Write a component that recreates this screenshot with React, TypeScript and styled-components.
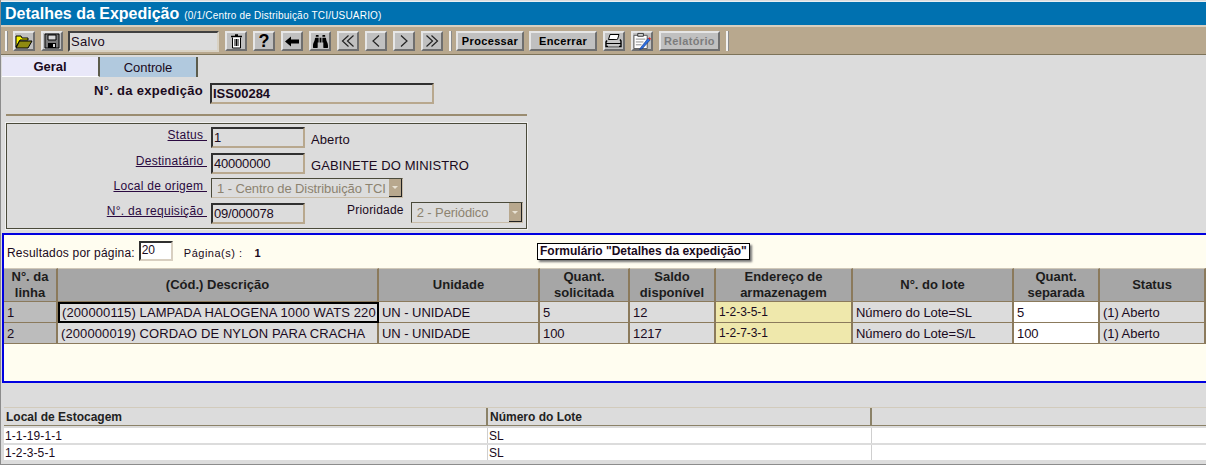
import React from 'react';
import styled, { createGlobalStyle, css } from 'styled-components';
import { FaBinoculars } from 'react-icons/fa';

const GlobalStyle = createGlobalStyle`
  html, body {
    margin: 0;
    padding: 0;
    background: #dcdcdc;
    overflow: hidden;
  }
  body {
    font-family: 'Liberation Sans', Arial, sans-serif;
    font-size: 13px;
    color: #1a0a20;
  }
`;

const Page = styled.div`
  width: 1206px;
  height: 465px;
  box-sizing: border-box;
  padding-top: 1px;
  border-left: 1px solid #8c8c8c;
  border-bottom: 1px solid #8c8c8c;
  overflow: hidden;
  background: #dcdcdc;
`;

const TitleBar = styled.div`
  height: 23px;
  padding-left: 4px;
  border-top: 1px solid #e8f0f4;
  background: #0071b0;
  display: flex;
  align-items: center;
  gap: 5px;
  color: #fff;
  white-space: nowrap;
`;

const TitleText = styled.span`
  font-size: 16px;
  font-weight: bold;
`;

const TitleSub = styled.span`
  font-size: 10px;
  letter-spacing: 0.2px;
  margin-top: 3px;
`;

const Toolbar = styled.div`
  height: 26px;
  border-top: 2px solid #d8cfc0;
  border-bottom: 1px solid #7d7359;
  background: #b8a88e;
  display: flex;
  align-items: center;
  padding: 1px 0 0 4px;
`;

const Separator = styled.div<{ $ml?: number; $mr?: number }>`
  width: 2px;
  height: 20px;
  background: #f2f2f2;
  border-right: 1px solid #8a8a8a;
  margin-left: ${p => p.$ml ?? 0}px;
  margin-right: ${p => p.$mr ?? 0}px;
`;

const raised = css`
  box-sizing: border-box;
  border-style: solid;
  border-width: 2px;
  border-color: #e6e6e6 #6f6f6f #6f6f6f #e6e6e6;
  background: #c0c0c0;
`;

const IconButton = styled.div<{ $mr?: number }>`
  ${raised}
  width: 22px;
  height: 20px;
  flex: none;
  display: flex;
  align-items: center;
  justify-content: center;
  margin-right: ${p => p.$mr ?? 6}px;
  color: #000;
`;

const HelpGlyph = styled.span`
  font-size: 18px;
  font-weight: bold;
  line-height: 16px;
`;

const TextButton = styled.div<{ $w: number; $mr?: number; $off?: boolean }>`
  ${raised}
  width: ${p => p.$w}px;
  height: 20px;
  flex: none;
  display: flex;
  align-items: center;
  justify-content: center;
  margin-right: ${p => p.$mr ?? 5}px;
  font-size: 11px;
  font-weight: bold;
  letter-spacing: 0.35px;
  color: ${p => (p.$off ? '#7c7c7c' : '#000')};
`;

const StatusBox = styled.div`
  box-sizing: border-box;
  width: 151px;
  height: 21px;
  flex: none;
  margin: 0 6px 0 5px;
  padding-left: 1px;
  display: flex;
  align-items: center;
  border-style: solid;
  border-width: 2px;
  border-color: #404040 #d9d2c4 #d9d2c4 #404040;
  background: #dcdcdc;
  font-size: 13px;
  letter-spacing: 0.3px;
`;

const Tabs = styled.div`
  display: flex;
  padding: 2px 0 0 1px;
  height: 20px;
`;

const Tab = styled.div<{ $active?: boolean }>`
  box-sizing: border-box;
  width: 98px;
  height: 20px;
  display: flex;
  align-items: center;
  justify-content: center;
  font-size: 13px;
  font-weight: ${p => (p.$active ? 'bold' : 'normal')};
  letter-spacing: ${p => (p.$active ? '0' : '-0.1px')};
  background: ${p => (p.$active ? '#e9e8f9' : '#b1c9de')};
  border-right: 2px solid #5c5c4c;
  border-bottom: ${p => (p.$active ? '1px solid #fff' : 'none')};
`;

const NumberRow = styled.div`
  display: flex;
  align-items: flex-start;
  padding-top: 6px;
  height: 31px;
`;

const NumberLabel = styled.div`
  width: 202px;
  text-align: right;
  font-weight: bold;
  letter-spacing: 0.3px;
`;

const sunken = css`
  box-sizing: border-box;
  border-style: solid;
  border-width: 2px;
  border-color: #303030 #b8a88e #b8a88e #303030;
  background: #dcdcdc;
  display: flex;
  align-items: center;
  padding-left: 1px;
`;

const NumberInput = styled.div`
  ${sunken}
  width: 224px;
  height: 21px;
  margin-left: 7px;
  font-weight: bold;
`;

const Divider = styled.div`
  width: 521px;
  height: 2px;
  margin: 0 0 7px 5px;
  background: #9a8c70;
`;

const HeaderPanel = styled.div`
  box-sizing: border-box;
  width: 521px;
  height: 106px;
  margin-left: 5px;
  padding-top: 3px;
  border: 1px solid #4a4a3a;
  outline: 1px solid #f0f0f0;
  display: flex;
  flex-direction: column;
`;

const FieldRow = styled.div<{ $h: number }>`
  height: ${p => p.$h}px;
  flex: none;
  display: flex;
  align-items: flex-start;
`;

const FieldLabel = styled.div`
  width: 200px;
  padding-top: 1px;
  font-size: 12px;
  text-align: right;
  text-decoration: underline;
  letter-spacing: 0.3px;
  white-space: pre;
  color: #2a0a40;
`;

const FieldInput = styled.div`
  ${sunken}
  width: 94px;
  height: 21px;
  margin-left: 4px;
  letter-spacing: -0.2px;
`;

const FieldText = styled.div`
  margin: 5px 0 0 6px;
  letter-spacing: 0.1px;
`;

const FakeSelect = styled.div<{ $w: number; $ml?: number; $h?: number; $mt?: number }>`
  box-sizing: border-box;
  width: ${p => p.$w}px;
  height: ${p => p.$h ?? 20}px;
  margin-left: ${p => p.$ml ?? 4}px;
  margin-top: ${p => p.$mt ?? 0}px;
  padding-left: 5px;
  display: flex;
  align-items: center;
  justify-content: space-between;
  flex: none;
  border-style: solid;
  border-width: 1px;
  border-color: #4a4a3a #c8bca8 #c8bca8 #4a4a3a;
  color: #8c8370;
  letter-spacing: -0.1px;
  white-space: nowrap;
`;

const SelectArrow = styled.div`
  width: 13px;
  height: 100%;
  background: #b8a88e;
  border-right: 1px solid #222;
  border-bottom: 1px solid #222;
  box-sizing: border-box;
  display: flex;
  align-items: center;
  justify-content: center;
  &::after {
    content: '';
    border-left: 3px solid transparent;
    border-right: 3px solid transparent;
    border-top: 3px solid #e8e2d4;
  }
`;

const PriorityLabel = styled.div`
  margin-left: 42px;
  font-size: 12px;
  letter-spacing: 0.2px;
`;

const BluePanel = styled.div`
  box-sizing: border-box;
  margin: 4px 0 0 1px;
  height: 150px;
  border: 2px solid #0000e0;
  border-right: none;
  background: #fffdf0;
`;

const PagerRow = styled.div`
  height: 30px;
  position: relative;
  display: flex;
  align-items: center;
  padding: 3px 0 0 3px;
  font-size: 12px;
  letter-spacing: 0.2px;
`;

const PageSizeInput = styled.div`
  ${sunken}
  width: 34px;
  height: 20px;
  margin: 0 11px 5px 4px;
  background: #fff;
  border-color: #303030 #d8cfc0 #d8cfc0 #303030;
  font-size: 12px;
  letter-spacing: -0.3px;
  align-items: flex-start;
`;

const PageLabel = styled.span`
  font-size: 11px;
  letter-spacing: 0.5px;
`;

const PageValue = styled.span`
  margin-left: 12px;
  font-size: 11px;
  font-weight: bold;
`;

const FormBadge = styled.div`
  position: absolute;
  left: 533px;
  top: 8px;
  height: 17px;
  box-sizing: border-box;
  padding: 0 2px;
  background: #fff;
  border: 1px solid #000;
  box-shadow: 2px 2px 2px #777;
  font-size: 12px;
  font-weight: bold;
  letter-spacing: 0;
  line-height: 15px;
  white-space: nowrap;
`;

const columns = '54px 321px 161px 90px 86px 137px 161px 86px 1fr';

const GridHead = styled.div`
  display: grid;
  grid-template-columns: ${columns};
  height: 34px;
`;

const HeadCell = styled.div`
  box-sizing: border-box;
  background: #a6a6a6;
  border-right: 2px solid #8b7a5c;
  border-top: 1px solid #d0c8b8;
  border-bottom: 1px solid #8b7a5c;
  display: flex;
  align-items: center;
  justify-content: center;
  text-align: center;
  font-weight: bold;
  line-height: 16px;
  color: #1c1c1c;
`;

const GridRow = styled.div`
  display: grid;
  grid-template-columns: ${columns};
  height: 21px;
`;

const Cell = styled.div<{ $kind?: 'index' | 'address' | 'input' | 'focus' }>`
  box-sizing: border-box;
  padding-left: 3px;
  display: flex;
  align-items: center;
  white-space: nowrap;
  letter-spacing: -0.05px;
  border-right: 2px solid #8b7a5c;
  border-bottom: 1px solid #8b7a5c;
  background: #dcdcdc;
  ${p => p.$kind === 'index' && 'background: #bcbcbc;'}
  ${p => p.$kind === 'address' && 'background: #efe8ac; font-size: 12px;'}
  ${p => p.$kind === 'input' && 'background: #fff;'}
  ${p => p.$kind === 'focus' && 'border: 2px solid #000; padding-left: 2px;'}
`;

const Description = styled.span`
  letter-spacing: 0.1px;
`;

const StockGrid = styled.div`
  margin-top: 24px;
  margin-left: 3px;
`;

const stockColumns = '484px 384px 1fr';

const StockHead = styled.div`
  display: grid;
  grid-template-columns: ${stockColumns};
  height: 19px;
  border-top: 1px solid #d2cbbc;
  box-sizing: border-box;
  border-bottom: 1px solid #8b8268;
`;

const StockHeadCell = styled.div`
  padding: 0 0 0 2px;
  border-right: 2px solid #8b8268;
  display: flex;
  align-items: center;
  font-size: 12px;
  font-weight: bold;
  color: #222;
  &:last-child {
    border-right: none;
  }
`;

const StockRow = styled.div`
  display: grid;
  grid-template-columns: ${stockColumns};
  height: 15px;
  margin-top: 2px;
  background: #fff;
`;

const StockCell = styled.div`
  padding-left: 1px;
  border-right: 1px solid #cfcfcf;
  display: flex;
  align-items: center;
  font-size: 12px;
  letter-spacing: 0.1px;
  &:last-child {
    border-right: none;
  }
`;

function FolderIcon() {
  return (
    <svg width="18" height="15" viewBox="0 0 18 15">
      <path d="M1 2h5l1 2h6v2H5L1 13z" fill="#f5f000" stroke="#000" />
      <path d="M1 14 4.500 7H17l-4 7z" fill="#8f8a10" stroke="#000" />
    </svg>
  );
}

function SaveIcon() {
  return (
    <svg width="16" height="16" viewBox="0 0 16 16">
      <path d="M1 1h14v14H1z" fill="#7a7a7a" stroke="#000" />
      <path d="M4 2h8v5H4z" fill="#d8d8d8" stroke="#000" />
      <path d="M4 10h8v5H4z" fill="#000" />
      <path d="M9 11h2v3H9z" fill="#d8d8d8" />
    </svg>
  );
}

function TrashIcon() {
  return (
    <svg width="13" height="15" viewBox="0 0 13 15">
      <path d="M1 2.500h11M5 1h3" stroke="#000" strokeWidth="1.6" fill="none" />
      <path d="M2.500 3.500v10.500h8V3.500" fill="#fff" stroke="#000" />
      <path d="M5 5v7M6.500 5v7M8 5v7" stroke="#000" strokeWidth="1" />
    </svg>
  );
}

function ArrowIcon() {
  return (
    <svg width="14" height="11" viewBox="0 0 14 11">
      <path d="M0 5.500 6 .5v3h8v4H6v3z" fill="#000" />
    </svg>
  );
}

function ChevronIcon({ dir, double }: { dir: 'left' | 'right'; double?: boolean }) {
  const flip = dir === 'right' ? 'translate(14 0) scale(-1 1)' : undefined;
  return (
    <svg width="14" height="12" viewBox="0 0 14 12">
      <g transform={flip} fill="none" stroke="#222" strokeWidth="1.200">
        {double ? (
          <>
            <path d="M7.500 .5 1.500 6l6 5.500" />
            <path d="M12.500 .5 6.500 6l6 5.500" />
          </>
        ) : (
          <path d="M10 .5 4 6l6 5.500" />
        )}
      </g>
    </svg>
  );
}

function PrinterIcon() {
  return (
    <svg width="18" height="16" viewBox="0 0 18 16">
      <path d="M5 1.500h9l-1.500 5H3.500z" fill="#fff" stroke="#000" />
      <path d="M2 7.500 1 9v4.500h15V8l-1-1.500" fill="#c8c8c8" stroke="#000" strokeWidth="1.400" />
      <path d="M1 10.500h15" stroke="#000" />
      <path d="M3 13h11" stroke="#fff" />
    </svg>
  );
}

function NotepadIcon() {
  return (
    <svg width="19" height="18" viewBox="0 0 19 18">
      <path d="M1 3h14v14H1z" fill="#fff" stroke="#555" />
      <path d="M5 1h6v3H5z" fill="#d0d0d0" stroke="#333" />
      <path d="M3 7h10M3 10h8M3 13h6" stroke="#8a8a8a" />
      <path d="M8 16 7 18l3-1 8-9-2-2z" fill="#2a6fe0" stroke="#0a2a80" strokeWidth="0.6" />
      <path d="m16 6 2 2 1-1.500-1.500-1.500z" fill="#e02020" />
    </svg>
  );
}

const rows = [
  {
    id: '1',
    description: '(200000115) LAMPADA HALOGENA 1000 WATS 220',
    requested: '5',
    balance: '12',
    address: '1-2-3-5-1',
    lot: 'Número do Lote=SL',
    picked: '5',
    focused: true,
  },
  {
    id: '2',
    description: '(200000019) CORDAO DE NYLON PARA CRACHA',
    requested: '100',
    balance: '1217',
    address: '1-2-7-3-1',
    lot: 'Número do Lote=S/L',
    picked: '100',
    focused: false,
  },
];

const stockRows = [
  { place: '1-1-19-1-1', lot: 'SL' },
  { place: '1-2-3-5-1', lot: 'SL' },
];

export default function App() {
  return (
    <Page>
      <GlobalStyle />
      <TitleBar>
        <TitleText>Detalhes da Expedição</TitleText>
        <TitleSub>(0/1/Centro de Distribuição TCI/USUARIO)</TitleSub>
      </TitleBar>
      <Toolbar>
        <Separator $mr={5} />
        <IconButton><FolderIcon /></IconButton>
        <IconButton $mr={0}><SaveIcon /></IconButton>
        <StatusBox>Salvo</StatusBox>
        <IconButton><TrashIcon /></IconButton>
        <IconButton><HelpGlyph>?</HelpGlyph></IconButton>
        <IconButton><ArrowIcon /></IconButton>
        <IconButton><FaBinoculars size={15} /></IconButton>
        <IconButton><ChevronIcon dir="left" double /></IconButton>
        <IconButton><ChevronIcon dir="left" /></IconButton>
        <IconButton><ChevronIcon dir="right" /></IconButton>
        <IconButton><ChevronIcon dir="right" double /></IconButton>
        <Separator $mr={4} />
        <TextButton $w={68}>Processar</TextButton>
        <TextButton $w={68} $mr={6}>Encerrar</TextButton>
        <IconButton><PrinterIcon /></IconButton>
        <IconButton><NotepadIcon /></IconButton>
        <TextButton $w={61} $mr={6} $off>Relatório</TextButton>
        <Separator />
      </Toolbar>
      <Tabs>
        <Tab $active>Geral</Tab>
        <Tab>Controle</Tab>
      </Tabs>
      <NumberRow>
        <NumberLabel>N°. da expedição</NumberLabel>
        <NumberInput>ISS00284</NumberInput>
      </NumberRow>
      <Divider />
      <HeaderPanel>
        <FieldRow $h={26}>
          <FieldLabel>{'Status '}</FieldLabel>
          <FieldInput>1</FieldInput>
          <FieldText>Aberto</FieldText>
        </FieldRow>
        <FieldRow $h={25}>
          <FieldLabel>{'Destinatário '}</FieldLabel>
          <FieldInput>40000000</FieldInput>
          <FieldText>GABINETE DO MINISTRO</FieldText>
        </FieldRow>
        <FieldRow $h={25}>
          <FieldLabel>{'Local de origem '}</FieldLabel>
          <FakeSelect $w={192}>
            1 - Centro de Distribuição TCI
            <SelectArrow />
          </FakeSelect>
        </FieldRow>
        <FieldRow $h={24}>
          <FieldLabel>{'N°. da requisição '}</FieldLabel>
          <FieldInput>09/000078</FieldInput>
          <PriorityLabel>Prioridade</PriorityLabel>
          <FakeSelect $w={112} $ml={7} $h={21} $mt={-1}>
            2 - Periódico
            <SelectArrow />
          </FakeSelect>
        </FieldRow>
      </HeaderPanel>
      <BluePanel>
        <PagerRow>
          Resultados por página:
          <PageSizeInput>20</PageSizeInput>
          <PageLabel>Página(s) :</PageLabel>
          <PageValue>1</PageValue>
          <FormBadge>Formulário "Detalhes da expedição"</FormBadge>
        </PagerRow>
        <GridHead>
          <HeadCell>N°. da<br />linha</HeadCell>
          <HeadCell>(Cód.) Descrição</HeadCell>
          <HeadCell>Unidade</HeadCell>
          <HeadCell>Quant.<br />solicitada</HeadCell>
          <HeadCell>Saldo<br />disponível</HeadCell>
          <HeadCell>Endereço de<br />armazenagem</HeadCell>
          <HeadCell>N°. do lote</HeadCell>
          <HeadCell>Quant.<br />separada</HeadCell>
          <HeadCell>Status</HeadCell>
        </GridHead>
        {rows.map(row => (
          <GridRow key={row.id}>
            <Cell $kind="index">{row.id}</Cell>
            <Cell $kind={row.focused ? 'focus' : undefined}>
              <Description>{row.description}</Description>
            </Cell>
            <Cell>UN - UNIDADE</Cell>
            <Cell>{row.requested}</Cell>
            <Cell>{row.balance}</Cell>
            <Cell $kind="address">{row.address}</Cell>
            <Cell>{row.lot}</Cell>
            <Cell $kind="input">{row.picked}</Cell>
            <Cell>(1) Aberto</Cell>
          </GridRow>
        ))}
      </BluePanel>
      <StockGrid>
        <StockHead>
          <StockHeadCell>Local de Estocagem</StockHeadCell>
          <StockHeadCell>Número do Lote</StockHeadCell>
          <StockHeadCell />
        </StockHead>
        {stockRows.map(row => (
          <StockRow key={row.place}>
            <StockCell>{row.place}</StockCell>
            <StockCell>{row.lot}</StockCell>
            <StockCell />
          </StockRow>
        ))}
      </StockGrid>
    </Page>
  );
}
